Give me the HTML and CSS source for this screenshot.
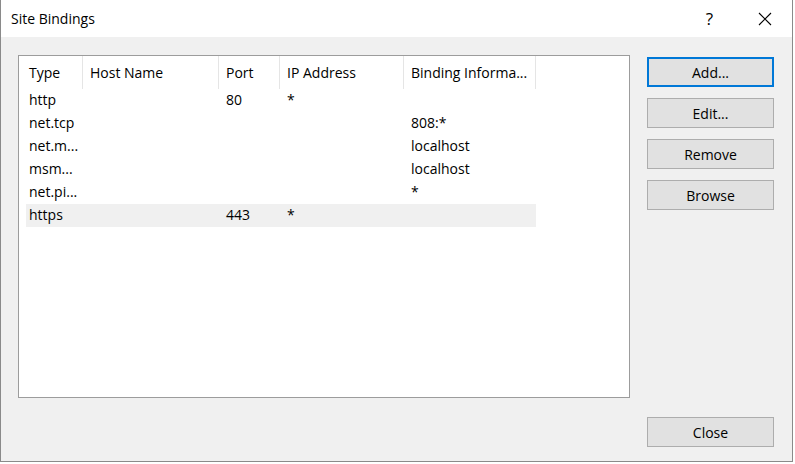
FILE: index.html
```html
<!DOCTYPE html>
<html>
<head>
<meta charset="utf-8">
<link rel="stylesheet" href="styles.css">
</head>
<body>
<div class="window">
  <div class="titlebar">
    <div class="title">Site Bindings</div>
    <div class="caption help">?</div>
    <div class="caption close">
      <svg width="14" height="14" viewBox="0 0 14 14"><path d="M1 1 L13 13 M13 1 L1 13" stroke="#000" stroke-width="1.1" fill="none"/></svg>
    </div>
  </div>
  <div class="client">
    <div class="listbox">
      <div class="header">
        <div class="hcell first">Type</div>
        <div class="hcell">Host Name</div>
        <div class="hcell">Port</div>
        <div class="hcell">IP Address</div>
        <div class="hcell">Binding Informa...</div>
      </div>
      <div class="row"><div class="cell first">http</div><div class="cell"></div><div class="cell">80</div><div class="cell">*</div><div class="cell"></div></div>
      <div class="row"><div class="cell first">net.tcp</div><div class="cell"></div><div class="cell"></div><div class="cell"></div><div class="cell">808:*</div></div>
      <div class="row"><div class="cell first">net.m...</div><div class="cell"></div><div class="cell"></div><div class="cell"></div><div class="cell">localhost</div></div>
      <div class="row"><div class="cell first">msm...</div><div class="cell"></div><div class="cell"></div><div class="cell"></div><div class="cell">localhost</div></div>
      <div class="row"><div class="cell first">net.pi...</div><div class="cell"></div><div class="cell"></div><div class="cell"></div><div class="cell">*</div></div>
      <div class="row selected"><div class="cell first">https</div><div class="cell"></div><div class="cell">443</div><div class="cell">*</div><div class="cell"></div></div>
    </div>
    <div class="side">
      <div class="btn default">Add...</div>
      <div class="btn">Edit...</div>
      <div class="btn">Remove</div>
      <div class="btn">Browse</div>
      <div class="btn closebtn">Close</div>
    </div>
  </div>
</div>
</body>
</html>
```
FILE: styles.css
```css
html, body {
  margin: 0;
  padding: 0;
  background: #ffffff;
}
body {
  font-family: "Open Sans", "Noto Sans", sans-serif;
  font-size: 14px;
  color: #000;
}
.window {
  width: 793px;
  height: 462px;
  box-sizing: border-box;
  border-left: 1px solid #8a8a8a;
  border-right: 1px solid #8a8a8a;
  border-bottom: 1px solid #8a8a8a;
  display: flex;
  flex-direction: column;
  background: #f0f0f0;
}
.titlebar {
  height: 37px;
  background: #ffffff;
  display: flex;
  align-items: center;
  flex: none;
}
.title {
  flex: 1;
  padding-left: 10px;
  font-size: 14px;
  line-height: 37px;
}
.caption {
  width: 55px;
  height: 37px;
  display: flex;
  align-items: center;
  justify-content: center;
}
.help {
  font-size: 17px;
  padding-bottom: 1px;
  box-sizing: border-box;
}
.client {
  flex: 1;
  display: flex;
  align-items: flex-start;
  padding: 18px 0 0 17px;
}
.listbox {
  width: 612px;
  height: 343px;
  box-sizing: border-box;
  border: 1px solid #9c9c9c;
  background: #ffffff;
  flex: none;
}
.header {
  display: grid;
  grid-template-columns: 64px 136px 61px 124px 132px;
  height: 33px;
}
.hcell {
  box-sizing: border-box;
  border-right: 1px solid #e5e5e5;
  padding-left: 7px;
  line-height: 33px;
  white-space: nowrap;
  overflow: hidden;
}
.hcell.first {
  padding-left: 10px;
}
.row {
  display: grid;
  grid-template-columns: 57px 136px 61px 124px 132px;
  height: 23px;
  margin-left: 7px;
  width: 510px;
}
.row.selected {
  background: #f0f0f0;
}
.cell {
  padding-left: 7px;
  line-height: 22px;
  white-space: nowrap;
}
.cell.first {
  padding-left: 3px;
}
.side {
  margin-left: 17px;
  margin-top: 2px;
  height: 390px;
  display: flex;
  flex-direction: column;
  gap: 11px;
}
.btn {
  width: 127px;
  height: 30px;
  box-sizing: border-box;
  background: #e1e1e1;
  border: 1px solid #adadad;
  display: flex;
  align-items: center;
  justify-content: center;
}
.btn.default {
  border: 2px solid #0078d7;
}
.closebtn {
  margin-top: auto;
}
```
